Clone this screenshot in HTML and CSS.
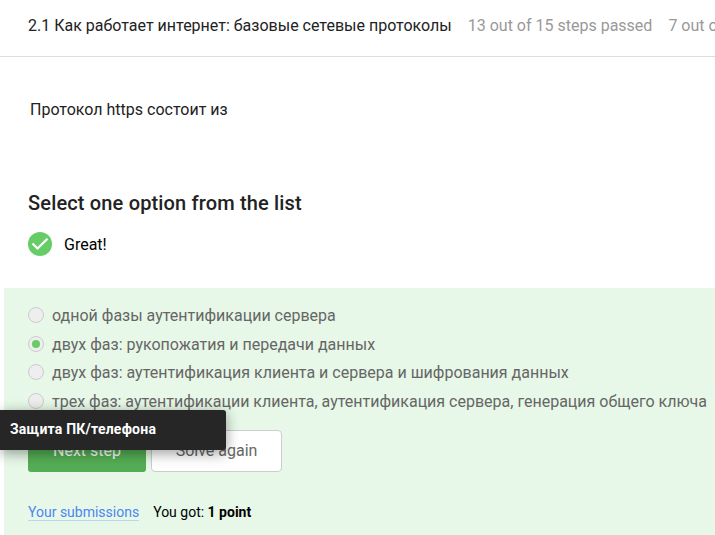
FILE: index.html
```html
<!DOCTYPE html>
<html lang="ru">
<head>
<meta charset="utf-8">
<title>Как работает интернет</title>
<link rel="stylesheet" href="styles.css">
</head>
<body>
<header class="topbar"><span class="lesson">2.1 Как работает интернет: базовые сетевые протоколы</span><span class="stat">13 out of 15 steps passed</span><span class="stat">7 out of 11 points received</span></header>
<main>
<p class="question">Протокол https состоит из</p>
<h2 class="title">Select one option from the list</h2>
<div class="feedback"><svg class="check" viewBox="0 0 24 24"><circle cx="12" cy="12" r="12" fill="#66cc66"/><path d="M4.5 11.5l5 5L19.5 6.7" fill="none" stroke="#fff" stroke-width="2.3"/></svg><span>Great!</span></div>
<section class="quiz">
<div class="option"><i class="radio"></i><span>одной фазы аутентификации сервера</span></div>
<div class="option"><i class="radio checked"></i><span>двух фаз: рукопожатия и передачи данных</span></div>
<div class="option short"><i class="radio"></i><span>двух фаз: аутентификация клиента и сервера и шифрования данных</span></div>
<div class="option"><i class="radio"></i><span>трех фаз: аутентификации клиента, аутентификация сервера, генерация общего ключа</span></div>
<div class="actions"><button class="btn primary">Next step</button><button class="btn">Solve again</button></div>
<div class="result"><a class="link">Your submissions</a><span>You got: <b>1 point</b></span></div>
</section>
</main>
<div class="tooltip">Защита ПК/телефона</div>
</body>
</html>
```
FILE: styles.css
```css
* { box-sizing: border-box; }
body { margin: 0; width: 715px; height: 535px; overflow: hidden; background: #fff; color: #222; font: 16px/24px Roboto, sans-serif; position: relative; }
.topbar { height: 57px; padding: 14px 0 0 28px; border-bottom: 1px solid #ddd; display: flex; gap: 16px; white-space: nowrap; overflow: hidden; }
.stat { color: #999; }
.question { margin: 41px 0 0 30px; }
.title { margin: 67px 0 0 28px; font-size: 20px; line-height: 28px; font-weight: 500; letter-spacing: .16px; }
.feedback { display: flex; align-items: flex-start; gap: 12px; height: 24px; margin: 15px 0 0 28px; color: #000; }
.feedback span { padding-top: 1px; }
.check { width: 24px; height: 24px; }
.quiz { margin: 32px 0 0 4px; height: 247px; padding: 19px 0 0 24px; background: #e7f8e8; white-space: nowrap; }
.option { display: flex; align-items: flex-start; gap: 8px; height: 29px; color: #666; }
.option:nth-child(2) { height: 28px; }
.option span { margin-top: -3px; }
.radio { width: 16px; height: 16px; flex: none; border: 1px solid #ccc; border-radius: 50%; background: #eee; display: grid; place-items: center; }
.checked::after { content: ""; width: 8px; height: 8px; border-radius: 50%; background: #66cc66; }
.actions { display: flex; gap: 5px; margin-top: 8px; }
.btn { width: 131px; height: 42px; padding: 0; border: 1px solid #ccc; border-radius: 4px; background: #fff; color: #666; font: 16px/24px Roboto, sans-serif; }
.primary { width: 118px; border: 0; border-radius: 3px; background: #54ad54; color: #fff; }
.result { display: flex; gap: 14px; margin-top: 30px; font-size: 14px; line-height: 20px; color: #000; }
.link { height: 19px; color: #4a86f0; border-bottom: 1px solid #b3d9f5; line-height: 20px; }
.tooltip { position: absolute; left: 0; top: 410px; width: 226px; height: 40px; padding: 0 10px; border-radius: 0 3px 3px 0; background: #262626; color: #fff; font-size: 14px; line-height: 39px; font-weight: 700; letter-spacing: .22px; box-shadow: 0 3px 14px rgba(0,0,0,.4); }
```
